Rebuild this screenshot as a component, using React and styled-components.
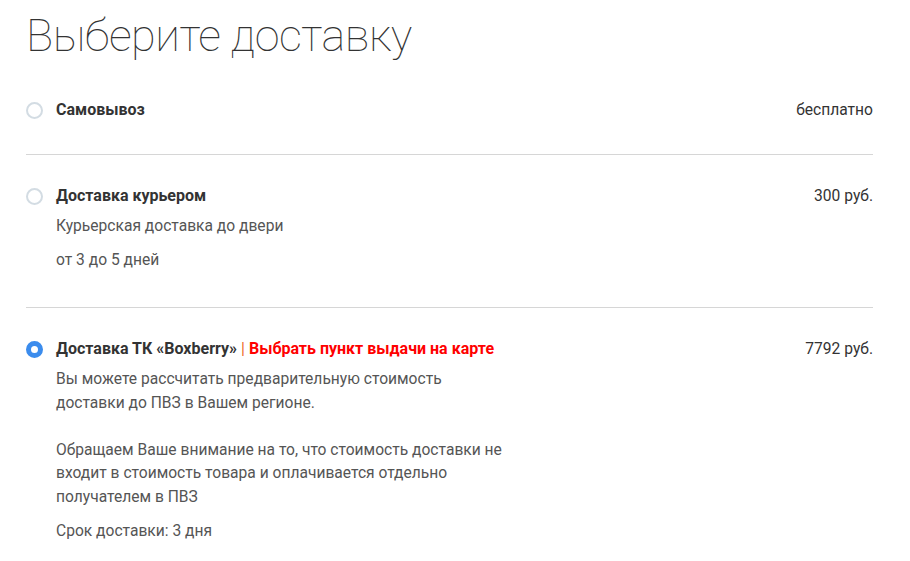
import React from 'react'
import styled, { createGlobalStyle } from 'styled-components'

const GlobalStyle = createGlobalStyle`
  html, body {
    margin: 0;
    padding: 0;
    background: #fff;
  }
  body {
    font-family: Roboto, "Liberation Sans", Arial, sans-serif;
    color: #333;
  }
`

const Page = styled.div`
  width: 847px;
  padding: 8px 0 0 26px;
`

const Heading = styled.h1`
  margin: 0 0 6px;
  font-size: 45px;
  line-height: 55px;
  font-weight: 100;
  color: #333;
  letter-spacing: -0.5px;
`

const Option = styled.div`
  display: flex;
  align-items: flex-start;
  padding: 29px 0 ${p => p.$pad || 32}px;
  border-bottom: ${p => (p.$last ? 'none' : '1px solid #d6d6d6')};
`

const Radio = styled.span`
  flex: none;
  box-sizing: border-box;
  width: 17px;
  height: 17px;
  margin: 3.5px 13px 0 0;
  border-radius: 50%;
  border: ${p => (p.$checked ? '5px solid #3b8ced' : '2px solid #d3dce3')};
  background: #fff;
`

const Body = styled.div`
  flex: 1;
  font-size: 15.6px;
`

const Head = styled.div`
  display: flex;
  justify-content: space-between;
  align-items: baseline;
  line-height: 24px;
`

const Title = styled.div`
  font-size: 16px;
  font-weight: 700;
  color: #333;
`

const Sep = styled.span`
  font-weight: 400;
  color: #ee6a2a;
`

const MapLink = styled.a`
  color: #f00;
  text-decoration: none;
  cursor: pointer;
`

const Price = styled.div`
  color: #333;
`

const Desc = styled.div`
  margin-top: ${p => p.$top || 6}px;
  max-width: 450px;
  color: #555;
  line-height: ${p => p.$lh || 24}px;

  p {
    margin: 0;
  }
  p + p {
    margin-top: ${p => p.$lh || 24}px;
  }
`

const Term = styled.div`
  margin-top: 10px;
  color: #555;
  line-height: 24px;
`

const App = () => {
  return (
    <Page>
      <GlobalStyle />
      <Heading>Выберите доставку</Heading>

      <Option>
        <Radio />
        <Body>
          <Head>
            <Title>Самовывоз</Title>
            <Price>бесплатно</Price>
          </Head>
        </Body>
      </Option>

      <Option $pad={35}>
        <Radio />
        <Body>
          <Head>
            <Title>Доставка курьером</Title>
            <Price>300 руб.</Price>
          </Head>
          <Desc>Курьерская доставка до двери</Desc>
          <Term>от 3 до 5 дней</Term>
        </Body>
      </Option>

      <Option $last>
        <Radio $checked />
        <Body>
          <Head>
            <Title>
              Доставка ТК «Boxberry» <Sep>|</Sep> <MapLink>Выбрать пункт выдачи на карте</MapLink>
            </Title>
            <Price>7792 руб.</Price>
          </Head>
          <Desc $top={7} $lh={23.5}>
            <p>Вы можете рассчитать предварительную стоимость доставки до ПВЗ в Вашем регионе.</p>
            <p>Обращаем Ваше внимание на то, что стоимость доставки не входит в стоимость товара и оплачивается отдельно получателем в ПВЗ</p>
          </Desc>
          <Term>Срок доставки: 3 дня</Term>
        </Body>
      </Option>
    </Page>
  )
}

export default App
